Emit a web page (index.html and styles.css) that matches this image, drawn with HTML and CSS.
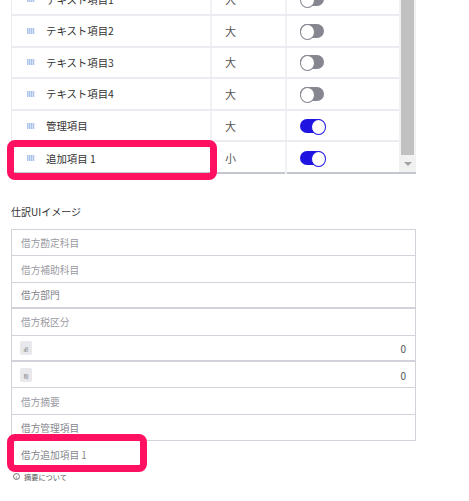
FILE: index.html
```html
<!DOCTYPE html>
<html lang="ja">
<head>
    <meta charset="UTF-8">
    <title>仕訳UIイメージ</title>
    <link rel="stylesheet" href="styles.css">
</head>
<body>
    <section class="item-table">
        <div class="item-rows">
            <div class="item-row">
                <div class="cell-name"><svg class="grip" viewBox="0 0 8 6"><path d="M.5 0v6M2.5 0v6M4.5 0v6M6.5 0v6"/></svg>テキスト項目1</div>
                <div class="cell-size">大</div>
                <div class="cell-toggle"><span class="toggle"></span></div>
            </div>
            <div class="item-row">
                <div class="cell-name"><svg class="grip" viewBox="0 0 8 6"><path d="M.5 0v6M2.5 0v6M4.5 0v6M6.5 0v6"/></svg>テキスト項目2</div>
                <div class="cell-size">大</div>
                <div class="cell-toggle"><span class="toggle"></span></div>
            </div>
            <div class="item-row">
                <div class="cell-name"><svg class="grip" viewBox="0 0 8 6"><path d="M.5 0v6M2.5 0v6M4.5 0v6M6.5 0v6"/></svg>テキスト項目3</div>
                <div class="cell-size">大</div>
                <div class="cell-toggle"><span class="toggle"></span></div>
            </div>
            <div class="item-row">
                <div class="cell-name"><svg class="grip" viewBox="0 0 8 6"><path d="M.5 0v6M2.5 0v6M4.5 0v6M6.5 0v6"/></svg>テキスト項目4</div>
                <div class="cell-size">大</div>
                <div class="cell-toggle"><span class="toggle"></span></div>
            </div>
            <div class="item-row">
                <div class="cell-name"><svg class="grip" viewBox="0 0 8 6"><path d="M.5 0v6M2.5 0v6M4.5 0v6M6.5 0v6"/></svg>管理項目</div>
                <div class="cell-size">大</div>
                <div class="cell-toggle"><span class="toggle on"></span></div>
            </div>
            <div class="item-row">
                <div class="cell-name"><svg class="grip" viewBox="0 0 8 6"><path d="M.5 0v6M2.5 0v6M4.5 0v6M6.5 0v6"/></svg>追加項目 1</div>
                <div class="cell-size">小</div>
                <div class="cell-toggle"><span class="toggle on"></span></div>
            </div>
        </div>
        <div class="scrollbar">
            <div class="scroll-thumb"></div>
            <div class="scroll-arrow"></div>
        </div>
        <div class="highlight highlight-row"></div>
    </section>

    <h2 class="form-title">仕訳UIイメージ</h2>

    <div class="form-wrap">
        <section class="form-box">
            <div class="form-row muted">借方勘定科目</div>
            <div class="form-row muted">借方補助科目</div>
            <div class="form-row thick">借方部門</div>
            <div class="form-row muted">借方税区分</div>
            <div class="form-row thick"><span class="badge">必</span><span class="amount">0</span></div>
            <div class="form-row"><span class="badge">税</span><span class="amount">0</span></div>
            <div class="form-row muted">借方摘要</div>
            <div class="form-row">借方管理項目</div>
        </section>
        <div class="form-row extra">借方追加項目 1</div>
        <div class="highlight highlight-form"></div>
    </div>

    <p class="note"><span class="info">i</span>摘要について</p>
</body>
</html>
```

FILE: styles.css
```css
:root {
    --color-line: #d2d3da;
    --color-row: #ebecf1;
    --color-pink: #ff1060;
    --font-base: "Noto Sans CJK JP", "Noto Sans", sans-serif;
}

* {
    margin: 0;
    padding: 0;
    box-sizing: border-box;
}

html, body {
    height: 100%;
    overflow: hidden;
    background: #fff;
}

body {
    font-family: var(--font-base);
    font-size: 10px;
    color: #333;
    padding-left: 11px;
}

.item-table {
    position: relative;
    width: 405px;
    height: 189.6px;
    margin-top: -15.6px;
    display: flex;
    border-bottom: 2px solid #c3c5cf;
    border-left: 1px solid var(--color-row);
}

.item-rows {
    flex: 1;
}

.item-row {
    height: 31.6px;
    display: grid;
    grid-template-columns: 198px 75px 1fr;
    border-bottom: 2px solid var(--color-row);
}

.item-row:last-child {
    border-bottom: 0;
}

.cell-name {
    display: flex;
    align-items: center;
    padding-left: 15px;
    font-size: 10.4px;
    color: #333;
}

.grip {
    width: 8px;
    height: 6px;
    margin-right: 11px;
}

.grip path {
    stroke: #a9c3ea;
    stroke-width: 1.5;
    fill: none;
}

.cell-size {
    display: flex;
    align-items: center;
    padding-left: 13px;
    border-left: 2px solid #f0f1f4;
    font-size: 11px;
    color: #555;
}

.cell-toggle {
    display: flex;
    align-items: center;
    padding-left: 13px;
    border-left: 2px solid #f0f1f4;
}

.toggle {
    width: 24px;
    height: 14px;
    border-radius: 7px;
    background: #85868f;
    position: relative;
}

.toggle::after {
    content: '';
    position: absolute;
    top: 0;
    left: 0;
    width: 13px;
    height: 14px;
    border-radius: 50%;
    background: #fff;
    border: 1px solid #85868f;
}

.toggle.on {
    background: #1f14e0;
}

.toggle.on::after {
    left: 11px;
    border-color: #1f14e0;
}

.scrollbar {
    width: 17px;
    background: #f1f1f1;
    padding: 0 2px;
    display: flex;
    flex-direction: column;
}

.scroll-thumb {
    flex: 1;
    background: #c1c1c1;
}

.scroll-arrow {
    height: 17px;
    display: flex;
    align-items: center;
    justify-content: center;
}

.scroll-arrow::after {
    content: '';
    border-left: 4px solid transparent;
    border-right: 4px solid transparent;
    border-top: 4px solid #a3a3a3;
}

.highlight {
    position: absolute;
    border: 7px solid var(--color-pink);
    border-radius: 8px;
}

.highlight-row {
    left: -5px;
    top: 155.6px;
    width: 210px;
    height: 40px;
}

.form-title {
    font-size: 10px;
    font-weight: 400;
    color: #333;
    line-height: 14px;
    margin-top: 31px;
}

.form-wrap {
    position: relative;
    width: 405px;
    margin-top: 10px;
}

.form-box {
    border: 1px solid var(--color-line);
    border-bottom: 0;
}

.form-row {
    height: 26.4px;
    display: flex;
    align-items: center;
    justify-content: space-between;
    padding: 1px 9px 0;
    border-bottom: 1px solid var(--color-line);
    color: #85858d;
    font-size: 9.7px;
}

.form-row.muted {
    color: #9a9aa2;
}

.form-row.thick {
    border-bottom-width: 2px;
}

.form-row.extra {
    border-bottom: 0;
    padding-left: 10px;
}

.badge {
    width: 12px;
    height: 14px;
    margin-left: -1px;
    border-radius: 2px;
    background: #e8e8ed;
    font-size: 5px;
    display: flex;
    align-items: center;
    justify-content: center;
    color: #777;
}

.amount {
    color: #555;
    font-size: 10px;
}

.highlight-form {
    left: -4px;
    top: 205px;
    width: 140px;
    height: 38px;
}

.note {
    display: flex;
    align-items: center;
    font-size: 7.2px;
    color: #555;
    margin-top: 4px;
    padding-left: 2px;
}

.info {
    width: 7px;
    height: 7px;
    border: 1px solid #777;
    border-radius: 50%;
    font-size: 5px;
    line-height: 5px;
    text-align: center;
    margin-right: 4px;
}
```
